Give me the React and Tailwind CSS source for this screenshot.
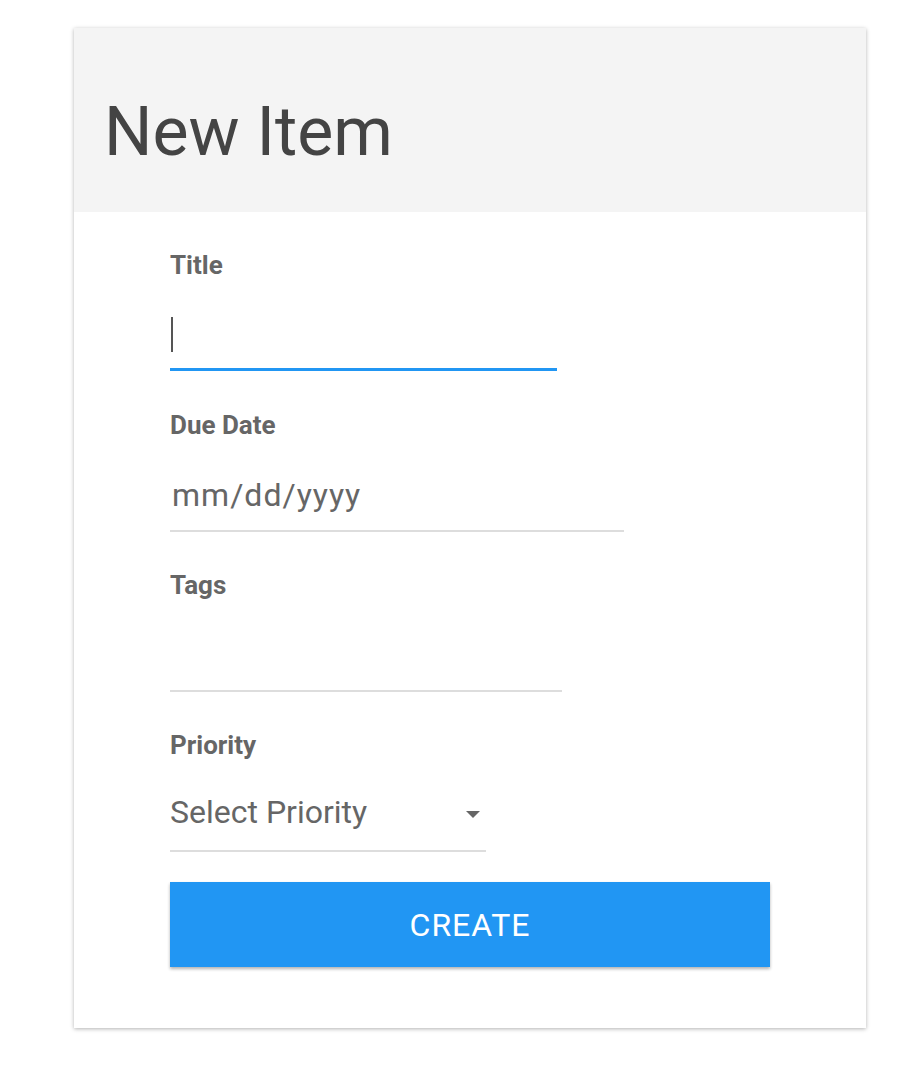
export default function App() {
  return (
    <div className="min-h-screen bg-white pt-[28px] pl-[74px] font-['Roboto',sans-serif]">
      <div className="w-[792px] h-[1000px] bg-white shadow-[0_1px_4px_rgba(0,0,0,0.3)]">
        {/* Header */}
        <div className="h-[184px] bg-[#f4f4f4] pl-[30px] pt-[70px]">
          <h1 className="text-[68px] leading-none font-normal text-[#444]">New Item</h1>
        </div>

        {/* Form */}
        <div className="pl-[96px] pt-[38px] flex flex-col">
          <label className="text-[26px] leading-[30px] font-bold text-[#666]">Title</label>
          <div className="w-[387px] h-[91px] border-b-[3px] border-[#2196f3] flex items-start pt-[37px]">
            <span className="ml-[1px] w-[2px] h-[35px] bg-[#555]" />
          </div>

          <label className="mt-[39px] text-[26px] leading-[30px] font-bold text-[#666]">Due Date</label>
          <div className="w-[454px] h-[92px] border-b-2 border-[#ddd] flex items-end pb-[16px]">
            <span className="pl-[2px] text-[32px] leading-[38px] text-[#666] tracking-[1px]">mm/dd/yyyy</span>
          </div>

          <label className="mt-[38px] text-[26px] leading-[30px] font-bold text-[#666]">Tags</label>
          <div className="w-[392px] h-[92px] border-b-2 border-[#ddd]" />

          <label className="mt-[38px] text-[26px] leading-[30px] font-bold text-[#666]">Priority</label>
          <div className="w-[316px] h-[92px] border-b-2 border-[#ddd] flex items-end justify-between pb-[19px] pr-[6px]">
            <span className="text-[32px] leading-[38px] text-[#666]">Select Priority</span>
            <svg width="14" height="7" viewBox="0 0 14 7" className="mb-[13px]">
              <polygon points="0,0 14,0 7,7" fill="#666" />
            </svg>
          </div>

          <button className="mt-[30px] w-[600px] h-[85px] bg-[#2196f3] text-white text-[32px] tracking-[1px] shadow-[0_2px_3px_rgba(0,0,0,0.3)]">
            CREATE
          </button>
        </div>
      </div>
    </div>
  );
}
